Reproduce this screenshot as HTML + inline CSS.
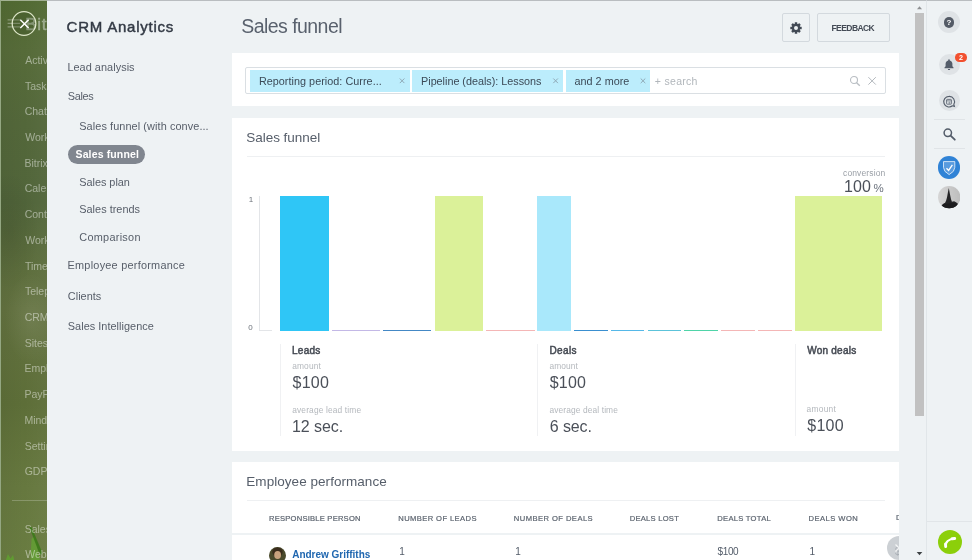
<!DOCTYPE html>
<html lang="en">
<head>
<meta charset="utf-8">
<title>Sales funnel</title>
<style>
*{box-sizing:border-box;margin:0;padding:0}
html,body{width:972px;height:560px;overflow:hidden;background:#eef2f4}
body{position:relative;-webkit-font-smoothing:antialiased;font-family:"Liberation Sans","DejaVu Sans",sans-serif;color:#535c69}
.abs{position:absolute}
.t{position:absolute;white-space:nowrap;line-height:1}
#root{position:absolute;left:0;top:0;width:972px;height:560px;will-change:transform}
/* left green strip */
#strip{left:0;top:0;width:47px;height:560px;overflow:hidden;
 background:radial-gradient(ellipse 26px 46px at 30px 318px,rgba(255,255,255,.08),rgba(255,255,255,0)),radial-gradient(ellipse 30px 60px at 8px 230px,rgba(0,0,0,.08),rgba(0,0,0,0)),linear-gradient(90deg,rgba(0,0,0,.04) 0,rgba(0,0,0,0) 50%,rgba(255,255,255,.03) 100%),linear-gradient(180deg,#526a33 0,#566b39 9%,#53673a 22%,#51653a 36%,#5d6e3d 48%,#62713f 55%,#5d6e38 72%,#66783f 87%,#697c41 100%);
 border-left:1px solid #94a782;border-top:1px solid #a3b193}
#strip .m{position:absolute;left:24px;color:rgba(255,255,255,.46);font-size:10.5px;letter-spacing:.2px;white-space:nowrap;line-height:1}
/* panel */
#panel{left:47px;top:0;width:879px;height:560px;background:#eef2f4;border-top:1px solid #b9bdc0}
.nav{position:absolute;white-space:nowrap;line-height:1;font-size:10.9px;color:#575e69}
.card{position:absolute;background:#fff}
.lbl{position:absolute;white-space:nowrap;line-height:1;font-size:8.4px;color:#b4b8bd}
.val{position:absolute;white-space:nowrap;line-height:1;font-size:16px;color:#4b5059}
.hd{position:absolute;white-space:nowrap;line-height:1;font-size:10px;color:#454a53;-webkit-text-stroke:.5px #454a53}
.th{position:absolute;white-space:nowrap;line-height:1;font-size:7.6px;color:#5c646f;-webkit-text-stroke:.2px #5c646f;letter-spacing:.3px}
.td{position:absolute;white-space:nowrap;line-height:1;font-size:10px;color:#535c69}
.bar{position:absolute}
.sep{position:absolute;width:1px;background:#f0f1f3;top:344px;height:91.5px}
.tag{position:absolute;top:70px;height:22px;background:#bcedfc;font-size:11px;color:#3c4450;line-height:22px;white-space:nowrap}
.tg{font-size:10.800px;color:#3c4a57}
.rb{position:absolute;left:938px;width:22px;height:22px;border-radius:50%;background:#dfe3e6}
</style>
</head>
<body>
<div id="root">

<!-- left strip -->
<div id="strip" class="abs">
<svg class="abs" style="left:-1px;top:519px" width="47" height="41" viewBox="0 0 47 41"><path d="M31.500 19 C33 16 35 17 36 21 L40 41 L30.500 41Z" fill="#62a432" opacity=".75"/><path d="M29.400 7 L31.600 7.300 L42.500 33 L40.500 35.500 L38 30Z" fill="#3c7a1a" opacity=".9"/><path d="M5.500 41 L8 34 L10.500 38.500 L13 35 L14.500 41Z" fill="#5fa030" opacity=".85"/></svg>
  <span class="m" id="m1" style="left:24.20px;top:54.00px;letter-spacing:0.000px">Activity</span>
  <span class="m" id="m2" style="left:23.95px;top:80.00px;letter-spacing:0.000px">Tasks</span>
  <span class="m" id="m3" style="left:23.70px;top:105.00px;letter-spacing:0.000px">Chat</span>
  <span class="m" id="m4" style="left:24.20px;top:131.00px;letter-spacing:0.000px">Workgroups</span>
  <span class="m" id="m5" style="left:23.45px;top:157.00px;letter-spacing:0.000px">Bitrix24</span>
  <span class="m" id="m6" style="left:23.70px;top:182.00px;letter-spacing:0.000px">Calendar</span>
  <span class="m" id="m7" style="left:23.70px;top:208.00px;letter-spacing:0.000px">Contact</span>
  <span class="m" id="m8" style="left:24.20px;top:234.00px;letter-spacing:0.000px">Workflows</span>
  <span class="m" id="m9" style="left:23.95px;top:260.00px;letter-spacing:0.000px">Time</span>
  <span class="m" id="m10" style="left:23.95px;top:285.00px;letter-spacing:0.000px">Telephony</span>
  <span class="m" id="m11" style="left:23.70px;top:311.00px;letter-spacing:0.000px">CRM</span>
  <span class="m" id="m12" style="left:23.70px;top:337.00px;letter-spacing:0.000px">Sites</span>
  <span class="m" id="m13" style="left:23.45px;top:362.00px;letter-spacing:0.000px">Employees</span>
  <span class="m" id="m14" style="left:23.45px;top:388.00px;letter-spacing:0.000px">PayPal</span>
  <span class="m" id="m15" style="left:23.45px;top:414.00px;letter-spacing:0.000px">Mind</span>
  <span class="m" id="m16" style="left:23.70px;top:440.00px;letter-spacing:0.000px">Settings</span>
  <span class="m" id="m17" style="left:23.70px;top:465.00px;letter-spacing:0.000px">GDPR</span>
  <span class="m" id="m18" style="left:23.70px;top:523.00px;letter-spacing:0.000px">Sales</span>
  <span class="m" id="m19" style="left:24.20px;top:548.00px;letter-spacing:0.000px">Web</span>
<span class="t" id="bit" style="left:24.30px;top:15.00px;font-size:17px;font-weight:normal;-webkit-text-stroke:.4px rgba(235,240,235,.4);color:rgba(235,240,235,.4);letter-spacing:0.725px">Bit</span>
<svg class="abs" style="left:-1px;top:-1px" width="47" height="48" viewBox="0 0 47 48">
  <g stroke="rgba(255,255,255,.33)" stroke-width="1.200"><path d="M7.600 19.800H20M7.600 23.400H20M7.600 26.900H20"/></g>
  <circle cx="24" cy="23.500" r="11.800" fill="rgba(40,60,20,.18)" stroke="rgba(245,250,225,.85)" stroke-width="1.300"/>
  <path d="M20.300 19.800 L28.600 28 M28.600 19.800 L20.300 28" stroke="#fff" stroke-width="1.500"/>
</svg>
<div class="abs" style="left:11.400px;top:499px;width:35px;height:1px;background:rgba(255,255,255,.22)"></div>

</div>

<!-- slider panel -->
<div id="panel" class="abs"></div>

<!-- sidebar nav -->
<span class="t" id="crm" style="left:66.60px;top:18.80px;font-size:15px;font-weight:normal;-webkit-text-stroke:.45px #333a45;color:#333a45;letter-spacing:0.770px">CRM Analytics</span>
<span class="nav" id="n1" style="left:67.40px;top:62.40px;letter-spacing:0.046px">Lead analysis</span>
<span class="nav" id="n2" style="left:67.65px;top:91.20px;letter-spacing:-0.272px">Sales</span>
<span class="nav" id="n3" style="left:79.25px;top:120.50px;letter-spacing:0.087px">Sales funnel (with conve...</span>
<div class="abs" style="left:68px;top:145px;width:77px;height:19px;border-radius:10px;background:#80868f"></div>
<span class="nav" id="n4" style="left:75.50px;top:149.00px;color:#fff;font-weight:bold;font-size:10.5px;letter-spacing:0.137px">Sales funnel</span>
<span class="nav" id="n5" style="left:79.25px;top:176.50px;letter-spacing:-0.028px">Sales plan</span>
<span class="nav" id="n6" style="left:79.25px;top:203.75px;letter-spacing:0.023px">Sales trends</span>
<span class="nav" id="n7" style="left:79.25px;top:231.75px;letter-spacing:0.278px">Comparison</span>
<span class="nav" id="n8" style="left:67.55px;top:260.20px;letter-spacing:0.242px">Employee performance</span>
<span class="nav" id="n9" style="left:67.80px;top:290.80px;letter-spacing:0.036px">Clients</span>
<span class="nav" id="n10" style="left:67.80px;top:320.80px;letter-spacing:0.036px">Sales Intelligence</span>

<!-- header -->
<span class="t" id="h1" style="left:241.25px;top:16.50px;font-size:19.5px;color:#59616d;letter-spacing:-0.548px">Sales funnel</span>
<div class="abs" style="left:782px;top:13px;width:27.500px;height:28.500px;border:1px solid #d3d9de;border-radius:2px"></div>
<div class="abs" style="left:817px;top:13px;width:72.500px;height:28.500px;border:1px solid #d3d9de;border-radius:2px"></div>
<svg class="abs" style="left:789.500px;top:21.600px" width="12" height="12" viewBox="-6 -6 12 12"><g fill="#424a55"><rect x="-1.25" y="-5.7" width="2.5" height="3" rx=".3" transform="rotate(0)"/><rect x="-1.25" y="-5.7" width="2.5" height="3" rx=".3" transform="rotate(45)"/><rect x="-1.25" y="-5.7" width="2.5" height="3" rx=".3" transform="rotate(90)"/><rect x="-1.25" y="-5.7" width="2.5" height="3" rx=".3" transform="rotate(135)"/><rect x="-1.25" y="-5.7" width="2.5" height="3" rx=".3" transform="rotate(180)"/><rect x="-1.25" y="-5.7" width="2.5" height="3" rx=".3" transform="rotate(225)"/><rect x="-1.25" y="-5.7" width="2.5" height="3" rx=".3" transform="rotate(270)"/><rect x="-1.25" y="-5.7" width="2.5" height="3" rx=".3" transform="rotate(315)"/></g><circle r="3.100" fill="none" stroke="#424a55" stroke-width="2.200"/></svg>
<span class="t" id="fb" style="left:831.50px;top:23.80px;font-size:8.5px;font-weight:bold;color:#444b56;letter-spacing:-0.571px">FEEDBACK</span>

<!-- filter card -->
<div class="card" style="left:232px;top:53.300px;width:667px;height:53.100px"></div>
<div class="abs" style="left:245.300px;top:67px;width:640.700px;height:27px;border:1px solid #dadfe3;border-radius:2px;background:#fff"></div>
<div class="tag" style="left:250px;width:159.500px"></div><span class="t tg" id="tg1" style="left:258.90px;top:76.30px;letter-spacing:0.040px">Reporting period: Curre...</span>
<div class="tag" style="left:412.300px;width:150.600px"></div><span class="t tg" id="tg2" style="left:421.05px;top:76.30px;letter-spacing:-0.010px">Pipeline (deals): Lessons</span>
<div class="tag" style="left:566.100px;width:84.300px"></div><span class="t tg" id="tg3" style="left:574.55px;top:76.30px;letter-spacing:0.016px">and 2 more</span>
<span class="t" id="srch" style="left:654.80px;top:75.80px;font-size:10.5px;color:#b1b6bb;letter-spacing:0.298px">+ search</span>

<svg class="abs" style="left:396px;top:75px" width="260" height="12" viewBox="0 0 260 12">
  <g stroke="#8fa9b6" stroke-width="1" fill="none"><path d="M3.800 3.500l4.600 4.600M8.400 3.500l-4.600 4.600"/><path d="M157.300 3.500l4.600 4.600M161.900 3.500l-4.600 4.600"/><path d="M244.700 3.500l4.600 4.600M249.300 3.500l-4.600 4.600"/></g>
</svg>
<svg class="abs" style="left:848px;top:74px" width="32" height="14" viewBox="0 0 32 14">
  <circle cx="6" cy="6" r="3.500" fill="none" stroke="#b9bec3" stroke-width="1.100"/>
  <path d="M8.600 8.700 L11.800 11.800" stroke="#b9bec3" stroke-width="1.300"/>
  <path d="M20.400 3.200 L27.800 10.600 M27.800 3.200 L20.400 10.600" stroke="#b4b9be" stroke-width="1"/>
</svg>
<!-- funnel card -->
<div class="card" style="left:232px;top:118px;width:667px;height:332.500px"></div>
<span class="t" id="h2a" style="left:246.30px;top:130.70px;font-size:13.5px;color:#565e6a;letter-spacing:-0.039px">Sales funnel</span>
<div class="abs" style="left:247px;top:156px;width:638px;height:1px;background:#eef0f2"></div>
<span class="t" id="conv" style="left:843.00px;top:168.80px;font-size:8.5px;color:#9a9fa6;letter-spacing:0.131px">conversion</span>
<span class="t" id="c100" style="left:843.95px;top:178.50px;font-size:16px;color:#4b5059;letter-spacing:0.100px">100</span>
<span class="t" id="cpct" style="left:873.55px;top:182.50px;font-size:11.5px;color:#6a717c">%</span>
<span class="t" id="ax1" style="font-size:8px;color:#6d737b;left:248.75px;top:195.90px;">1</span>
<span class="t" id="ax0" style="font-size:8px;color:#6d737b;left:248.25px;top:324.00px;">0</span>
<div class="abs" style="left:259px;top:196px;width:1px;height:135px;background:#e3e5e8"></div>
<div class="abs" style="left:259px;top:330px;width:13px;height:1px;background:#e3e5e8"></div>
<!-- bars -->
<div class="bar" style="left:280.3px;top:195.6px;width:48.6px;height:135.4px;background:#2fc6f6"></div>
<div class="bar" style="left:331.8px;top:329.7px;width:48.2px;height:1.4px;background:#c3b8e6"></div>
<div class="bar" style="left:383px;top:329.7px;width:48.4px;height:1.4px;background:#4488c5"></div>
<div class="bar" style="left:434.5px;top:195.6px;width:48.5px;height:135.4px;background:#dbf199"></div>
<div class="bar" style="left:485.8px;top:329.7px;width:48.9px;height:1.4px;background:#f4b6b6"></div>
<div class="bar" style="left:537.4px;top:195.6px;width:33.6px;height:135.4px;background:#a9e8fb"></div>
<div class="bar" style="left:574px;top:329.7px;width:33.6px;height:1.4px;background:#3a8fd0"></div>
<div class="bar" style="left:610.8px;top:329.7px;width:33.6px;height:1.4px;background:#55b8e8"></div>
<div class="bar" style="left:647.6px;top:329.7px;width:33.6px;height:1.4px;background:#5cc3da"></div>
<div class="bar" style="left:684.4px;top:329.7px;width:33.6px;height:1.4px;background:#4fd4a8"></div>
<div class="bar" style="left:721.2px;top:329.7px;width:33.6px;height:1.4px;background:#f4b6b6"></div>
<div class="bar" style="left:758px;top:329.7px;width:33.8px;height:1.4px;background:#f4b6b6"></div>
<div class="bar" style="left:794.8px;top:195.6px;width:87.1px;height:135.4px;background:#dbf199"></div>
<!-- stats -->
<div class="sep" style="left:280px"></div>
<div class="sep" style="left:537px"></div>
<div class="sep" style="left:794.5px"></div>
<span class="hd" id="s1h" style="left:292.05px;top:346.10px;letter-spacing:0.254px">Leads</span>
<span class="lbl" id="s1a" style="left:292.20px;top:362.40px;letter-spacing:0.140px">amount</span>
<span class="val" id="s1v" style="left:292.45px;top:375.00px;letter-spacing:0.300px">$100</span>
<span class="lbl" id="s1b" style="left:292.20px;top:405.80px;letter-spacing:0.148px">average lead time</span>
<span class="val" id="s1w" style="left:291.90px;top:418.70px;letter-spacing:-0.042px">12 sec.</span>
<span class="hd" id="s2h" style="left:549.50px;top:346.10px;letter-spacing:0.345px">Deals</span>
<span class="lbl" id="s2a" style="left:549.50px;top:362.40px;letter-spacing:0.080px">amount</span>
<span class="val" id="s2v" style="left:549.75px;top:375.00px;letter-spacing:0.186px">$100</span>
<span class="lbl" id="s2b" style="left:549.50px;top:405.80px;letter-spacing:0.112px">average deal time</span>
<span class="val" id="s2w" style="left:549.75px;top:418.70px;letter-spacing:-0.100px">6 sec.</span>
<span class="hd" id="s3h" style="left:807.25px;top:346.10px;letter-spacing:0.229px">Won deals</span>
<span class="lbl" id="s3a" style="left:806.50px;top:404.80px;letter-spacing:0.280px">amount</span>
<span class="val" id="s3v" style="left:807.25px;top:417.90px;letter-spacing:0.250px">$100</span>

<!-- employee card -->
<div class="card" style="left:232px;top:461.700px;width:667px;height:98.300px"></div>
<span class="t" id="h2b" style="left:246.30px;top:474.70px;font-size:13.5px;color:#565e6a;letter-spacing:0.045px">Employee performance</span>
<div class="abs" style="left:247px;top:500px;width:638px;height:1px;background:#eef0f2"></div>
<div class="abs" style="left:232px;top:532.5px;width:667px;height:2px;background:#eef2f4"></div>
<span class="th" id="th1" style="left:269.00px;top:515.10px;letter-spacing:0.220px">RESPONSIBLE PERSON</span>
<span class="th" id="th2" style="left:398.30px;top:515.10px;letter-spacing:0.398px">NUMBER OF LEADS</span>
<span class="th" id="th3" style="left:513.80px;top:515.10px;letter-spacing:0.447px">NUMBER OF DEALS</span>
<span class="th" id="th4" style="left:629.70px;top:515.10px;letter-spacing:0.252px">DEALS LOST</span>
<span class="th" id="th5" style="left:717.30px;top:515.10px;letter-spacing:0.275px">DEALS TOTAL</span>
<span class="th" id="th6" style="left:808.50px;top:515.10px;letter-spacing:0.471px">DEALS WON</span>
<span class="th" id="th7" style="left:896px;top:514px">DEALS IN PROGRESS</span>
<!-- avatar -->
<svg class="abs" style="left:269px;top:546.5px" width="17" height="14" viewBox="0 0 17 14">
  <defs><clipPath id="avc"><circle cx="8.5" cy="8.5" r="8.5"/></clipPath></defs>
  <g clip-path="url(#avc)">
    <rect width="17" height="17" fill="#4a4a2c"/>
    <ellipse cx="8.5" cy="5" rx="5.2" ry="4.6" fill="#3a2c1c"/>
    <ellipse cx="8.6" cy="8" rx="3.4" ry="4" fill="#c9a27e"/>
    <path d="M1 17 Q8.5 10 16 17Z" fill="#6b7a46"/>
  </g>
</svg>
<span class="t" id="emp" style="left:292.20px;top:549.70px;font-size:10px;font-weight:bold;color:#2067b0;letter-spacing:-0.015px">Andrew Griffiths</span>
<span class="td" id="td2" style="left:399.25px;top:546.80px">1</span>
<span class="td" id="td3" style="left:515.25px;top:546.80px">1</span>
<span class="td" id="td5" style="left:717.60px;top:547.40px;letter-spacing:-0.417px">$100</span>
<span class="td" id="td6" style="left:809.55px;top:546.80px">1</span>
<span class="td" id="td7" style="left:895px;top:547px">$100</span>
<!-- scroll-right circle -->
<div class="abs" style="left:887px;top:536px;width:12px;height:24px;overflow:hidden">
  <div class="abs" style="left:0;top:0;width:24px;height:24px;border-radius:50%;background:rgba(190,195,200,.78)"></div>
  <svg class="abs" style="left:0;top:0" width="12" height="24" viewBox="0 0 12 24"><path d="M8.5 8.5 L12 12 L8.5 15.5" fill="none" stroke="#fff" stroke-width="1.3" opacity=".8"/></svg>
</div>

<!-- right area -->
<div class="abs" style="left:899px;top:1px;width:27px;height:559px;background:#eef2f4"></div>
<div class="abs" style="left:914.5px;top:13px;width:9px;height:403px;background:#c1c1c1"></div>
<svg class="abs" style="left:912px;top:0" width="14" height="560" viewBox="0 0 14 560">
  <path d="M5 9.300 L7.500 6.300 L10 9.300Z" fill="#8e9092"/>
  <path d="M4.7 552 L10.3 552 L7.5 555.2Z" fill="#3c4043"/>
</svg>
<div class="abs" style="left:926px;top:0;width:46px;height:560px;background:#eef2f4;border-left:1px solid #e1e6e9;border-top:1px solid #b9bdc0"></div>
<div class="abs" style="left:927px;top:521px;width:45px;height:1px;background:#e1e5e8"></div>
<div class="abs" style="left:934px;top:118.5px;width:31px;height:1px;background:#e0e4e7"></div>
<div class="abs" style="left:934px;top:148px;width:31px;height:1px;background:#e0e4e7"></div>

<!-- help -->
<div class="rb" style="left:938px;top:11.300px;width:22px;height:22px"></div>
<div class="abs" style="left:943.700px;top:17.300px;width:10.600px;height:10.600px;border-radius:50%;background:#545b66"></div>
<span class="t" id="q" style="left:946.6px;top:18.9px;font-size:8px;font-weight:bold;color:#fff">?</span>
<!-- bell -->
<div class="rb" style="left:938.600px;top:53.500px;width:21px;height:21px"></div>
<svg class="abs" style="left:942.900px;top:57.500px" width="12" height="14" viewBox="0 0 12 14">
  <path d="M6 1.2c.5 0 .8.3.8.8v.4c1.600.4 2.600 1.700 2.600 3.400v2.400l1.100 1.400v.600H1.500v-.6l1.100-1.400V5.800c0-1.700 1-3 2.600-3.400V2c0-.5.300-.8.800-.8z" fill="#535c69"/>
  <path d="M4.800 10.900h2.400a1.200 1.200 0 0 1-2.400 0z" fill="#535c69"/>
</svg>
<div class="abs" style="left:955.300px;top:53px;width:11.600px;height:8.600px;border-radius:4.300px;background:#f2502f"></div>
<span class="t" id="b2" style="left:959px;top:54.1px;font-size:7.2px;font-weight:bold;color:#fff">2</span>
<!-- chat -->
<div class="rb" style="left:939px;top:90.400px;width:21px;height:21px"></div>
<svg class="abs" style="left:941px;top:93.800px" width="16" height="16" viewBox="0 0 16 16">
  <path d="M8 2.400a5.300 5.300 0 1 0 3.400 9.400l2 .6-.6-2A5.300 5.300 0 0 0 8 2.400z" fill="none" stroke="#535c69" stroke-width="1.100"/>
  <rect x="5.600" y="5.400" width="4.800" height="4.800" rx=".6" fill="none" stroke="#535c69" stroke-width=".8"/>
  <path d="M5.600 6.800h4.800M7.600 8.200h1.600M7.600 9.200h1.600" stroke="#535c69" stroke-width=".6"/>
</svg>
<!-- search -->
<svg class="abs" style="left:942px;top:127px" width="15" height="15" viewBox="0 0 15 15">
  <circle cx="5.800" cy="5.800" r="3.700" fill="none" stroke="#535c69" stroke-width="1.500"/>
  <path d="M8.600 8.600 L12.800 12.700" stroke="#535c69" stroke-width="1.800" stroke-linecap="round"/>
</svg>
<!-- shield -->
<div class="abs" style="left:937.900px;top:156.200px;width:22.400px;height:22.400px;border-radius:50%;background:#3083d6"></div>
<svg class="abs" style="left:942px;top:160px" width="14" height="16" viewBox="0 0 14 16">
  <path d="M1.500 1.600 H12.800 V7.400 Q12.800 11.600 7.150 14.600 Q1.500 11.600 1.500 7.400Z" fill="rgba(255,255,255,.2)" stroke="rgba(255,255,255,.72)" stroke-width="1"/>
  <path d="M4.500 8.200 L6.600 10.400 L10.400 4.900" fill="none" stroke="#fff" stroke-width="1.300"/>
</svg>
<!-- avatar right -->
<svg class="abs" style="left:937.800px;top:186.400px" width="22.400" height="22.400" viewBox="0 0 23 23">
  <defs><clipPath id="avr"><circle cx="11.500" cy="11.500" r="11.500"/></clipPath><linearGradient id="avg" x1="0" x2="1" y1="0" y2="0"><stop offset="0" stop-color="#d6d6d6"/><stop offset="1" stop-color="#bdbdbd"/></linearGradient></defs>
  <g clip-path="url(#avr)">
    <rect width="23" height="23" fill="url(#avg)"/>
    <path d="M11.100 2 L12.300 8.500 L13.400 13.500 L14.300 16.300 L16.500 15.600 L18.500 16.800 L20.500 18.200 L23 20 L23 23 L0 23 L2.500 20.500 L5.500 19.200 L7 17.600 L8.300 15.200 L9.300 11.500 L10.300 6Z" fill="#242426"/>
    <path d="M4 19.500 L6.500 17.500 L8 18.500 L16 17.200 L19.500 18.800 L21 23 L3 23Z" fill="#1c1c1e"/>
  </g>
</svg>
<!-- call -->
<div class="abs" style="left:937.500px;top:530px;width:24.200px;height:24.200px;border-radius:50%;background:#8ccf0a"></div>
<svg class="abs" style="left:942px;top:534px" width="16" height="16" viewBox="0 0 16 16">
  <path d="M3.900 12.300 C3.300 8.200 6.500 4.900 12.300 4.700" fill="none" stroke="#fff" stroke-width="2.100" stroke-linecap="round"/><path d="M3.700 12.600 L3.500 10 M12.700 4.500 L10 4.700" stroke="#fff" stroke-width="2.900" stroke-linecap="round"/>
</svg>

</div>
</body>
</html>
